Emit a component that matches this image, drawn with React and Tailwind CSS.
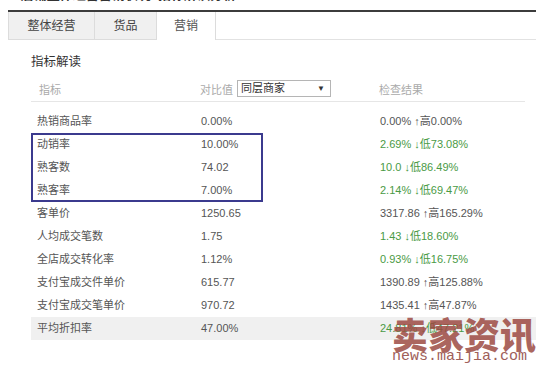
import React from "react";

const rows = [
  { name: "热销商品率", value: "0.00%", base: "0.00%", dir: "up", diff: "高0.00%" },
  { name: "动销率", value: "10.00%", base: "2.69%", dir: "down", diff: "低73.08%" },
  { name: "熟客数", value: "74.02", base: "10.0", dir: "down", diff: "低86.49%" },
  { name: "熟客率", value: "7.00%", base: "2.14%", dir: "down", diff: "低69.47%" },
  { name: "客单价", value: "1250.65", base: "3317.86", dir: "up", diff: "高165.29%" },
  { name: "人均成交笔数", value: "1.75", base: "1.43", dir: "down", diff: "低18.60%" },
  { name: "全店成交转化率", value: "1.12%", base: "0.93%", dir: "down", diff: "低16.75%" },
  { name: "支付宝成交件单价", value: "615.77", base: "1390.89", dir: "up", diff: "高125.88%" },
  { name: "支付宝成交笔单价", value: "970.72", base: "1435.41", dir: "up", diff: "高47.87%" },
  { name: "平均折扣率", value: "47.00%", base: "24.81%", dir: "down", diff: "低47.21%" },
];

const font = { fontFamily: '"Liberation Sans", "Noto Sans CJK SC", sans-serif' };

const App = () => {
  return (
    <div
      className="relative w-[536px] h-[367px] overflow-hidden bg-white text-[#555]"
      style={font}
    >
      {/* cut-off heading above the panel */}
      <div className="h-[10px] overflow-hidden pl-[10px]">
        <div className="-mt-[12px] text-[13px] leading-[14px] text-[#333] font-bold">
          7 店铺整体经营营销状况 &nbsp;指标解读分析
        </div>
      </div>
      <div className="ml-[8px] h-[2px] bg-[#3c3c3c]" />

      {/* tabs */}
      <div className="ml-[8px] flex h-[28px] text-[12px]">
        <div className="flex w-[87px] items-center justify-center border-b border-l border-r border-[#dcdcdc] bg-[#f0f0f0] text-[#444]">
          整体经营
        </div>
        <div className="flex w-[62px] items-center justify-center border-b border-r border-[#dcdcdc] bg-[#f0f0f0] text-[#444]">
          货品
        </div>
        <div className="flex w-[59px] items-center justify-center border-r border-[#dcdcdc] bg-white text-[#555]">
          营销
        </div>
        <div className="flex-1 border-b border-[#e2e2e2]" />
      </div>

      {/* content */}
      <div className="pl-[31px]">
        <div className="pt-[15px] text-[12.5px] leading-[15px] text-[#333]">指标解读</div>

        <div className="mr-[11px] mt-[10px] flex h-[22px] items-start border-b border-[#e6e6e6] pl-[8px] text-[11px] text-[#aaa]">
          <div className="w-[161px] pt-[2px]">指标</div>
          <div className="flex w-[179px] items-start">
            <span className="pt-[2px]">对比值</span>
            <div className="ml-[4px] flex h-[17px] w-[94px] items-center justify-between border border-[#b5b5b5] bg-white pl-[3px] pr-[5px] text-[#333]">
              <span>同层商家</span>
              <span className="text-[8px]">▼</span>
            </div>
          </div>
          <div className="pt-[2px]">检查结果</div>
        </div>

        <div className="relative mt-[8px] text-[11px]">
          {rows.map((r, i) => (
            <div
              key={r.name}
              className={
                i === rows.length - 1
                  ? "flex h-[23px] items-center bg-[#f0f0f0] pl-[6px]"
                  : "flex h-[23px] items-center pl-[6px]"
              }
            >
              <div className="w-[164px]">{r.name}</div>
              <div className="w-[179px] text-[#555]">{r.value}</div>
              <div className={r.dir === "down" ? "text-[#4a9a45]" : "text-[#555]"}>
                {r.base} {r.dir === "down" ? "↓" : "↑"}
                {r.diff}
              </div>
            </div>
          ))}
          <div className="absolute left-0 top-[23px] h-[69px] w-[232px] border-2 border-[#3b3a8e]" />
        </div>
      </div>

      {/* watermark over the table */}
      <div className="absolute left-[392px] top-[314px] flex flex-col items-start">
        <div
          className="text-[36px] font-black leading-[38px] text-[#9c4a42]/85"
          style={{ fontFamily: '"Noto Sans CJK SC", sans-serif' }}
        >
          卖家资讯
        </div>
        <div
          className="-mt-[2px] text-[15px] leading-[14px] text-[#a0605a]"
          style={{ fontFamily: '"Liberation Mono", monospace' }}
        >
          news.maijia.com
        </div>
      </div>
    </div>
  );
};

export default App;
